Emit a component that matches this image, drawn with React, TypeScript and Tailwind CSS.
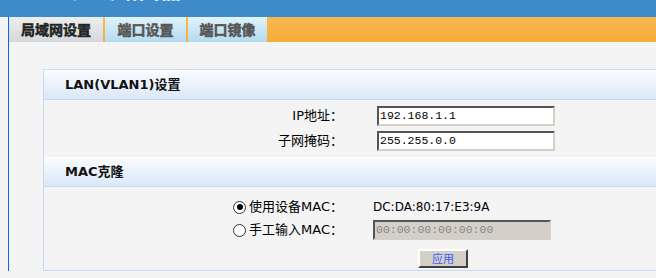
import React from "react"

const sans = "font-['DejaVu_Sans','Noto_Sans_CJK_SC',sans-serif]"
const mono = "font-['Liberation_Mono','Noto_Sans_CJK_SC',monospace]"

function Tab({ label, active, width }: { label: string; active?: boolean; width: string }) {
  return (
    <div
      className={
        "flex h-full items-center justify-center text-[14px] font-bold [-webkit-text-stroke:0.5px_currentColor] font-['Noto_Sans_CJK_SC',sans-serif] " +
        width +
        (active
          ? " bg-gradient-to-b from-[#eceded] to-[#d5d8db] text-[#222]"
          : " bg-gradient-to-b from-[#e2f2fa] to-[#b2dbef] text-[#555]")
      }
    >
      {label}
    </div>
  )
}

function SectionHeader({ title }: { title: string }) {
  return (
    <div
      className={
        "flex h-[30px] items-center border-b border-[#c6dbf1] bg-gradient-to-b from-[#fbfcfe] to-[#dae8f8] pl-[21px] text-[13px] font-bold text-[#111] " +
        sans
      }
    >
      {title}
    </div>
  )
}

function TextInput({ value, disabled }: { value: string; disabled?: boolean }) {
  return (
    <div
      className={
        "flex h-[20px] w-[178px] items-center border-2 border-t-[#555] border-l-[#555] border-b-[#d4d0c8] border-r-[#d4d0c8] pl-[1px] text-[11.5px] " +
        mono +
        (disabled ? " bg-[#d4d0c8] text-[#888]" : " bg-white text-black")
      }
    >
      {value}
    </div>
  )
}

function Radio({ checked }: { checked?: boolean }) {
  return (
    <span className="mr-[3px] flex h-[13px] w-[13px] items-center justify-center rounded-full border border-[#333] bg-white">
      {checked && <span className="h-[6px] w-[6px] rounded-full bg-black" />}
    </span>
  )
}

export default function App() {
  return (
    <div className="h-[278px] w-[656px] overflow-hidden bg-[#f4f4f4]">
      <div className="h-[17px] overflow-hidden bg-[#3f8bca]">
        <div className="-mt-[25px] pl-[72px] text-[22px] font-bold leading-[26px] text-white font-['Noto_Sans_CJK_SC',sans-serif]">
          无线路由器
        </div>
      </div>
      <div className="flex">
        <div className="w-[8px] shrink-0" />
        <div className="flex-1 border-l border-[#0b66f5]">
          <div className="flex h-[25px] gap-[2px] bg-gradient-to-b from-[#f9b851] to-[#f6ad38]">
            <Tab label="局域网设置" active width="w-[94px]" />
            <Tab label="端口设置" width="w-[81px]" />
            <Tab label="端口镜像" width="w-[79px]" />
          </div>
          <div className="pl-[34px] pt-[27px]">
            <div className="w-[700px] border border-[#c6dbf1]">
              <SectionHeader title="LAN(VLAN1)设置" />
              <div className={"flex flex-col gap-[5px] pb-[6px] pt-[6px] text-[13px] text-black " + sans}>
                <div className="flex h-[20px] items-center">
                  <span className="w-[299px] text-right">IP地址：</span>
                  <span className="ml-[34px]">
                    <TextInput value="192.168.1.1" />
                  </span>
                </div>
                <div className="flex h-[20px] items-center">
                  <span className="w-[299px] text-right">子网掩码：</span>
                  <span className="ml-[34px]">
                    <TextInput value="255.255.0.0" />
                  </span>
                </div>
              </div>
              <SectionHeader title="MAC克隆" />
              <div className={"flex flex-col pb-[2px] pt-[10px] text-[13px] text-black " + sans}>
                <div className="flex h-[20px] items-center">
                  <span className="flex w-[299px] items-center justify-end">
                    <Radio checked />
                    使用设备MAC：
                  </span>
                  <span className="ml-[30px] text-[12px]">DC:DA:80:17:E3:9A</span>
                </div>
                <div className="mt-[3px] flex h-[20px] items-center">
                  <span className="flex w-[299px] items-center justify-end">
                    <Radio />
                    手工输入MAC：
                  </span>
                  <span className="ml-[30px]">
                    <TextInput value="00:00:00:00:00:00" disabled />
                  </span>
                </div>
                <div className="ml-[374px] mt-[9px]">
                  <button className="flex h-[19px] w-[50px] items-center justify-center border-2 border-t-white border-l-white border-b-[#404040] border-r-[#404040] bg-[#d4d0c8] text-[11px] text-[#3a5cf5] font-['Noto_Sans_CJK_SC',sans-serif]">
                    应用
                  </button>
                </div>
              </div>
            </div>
          </div>
        </div>
      </div>
    </div>
  )
}
